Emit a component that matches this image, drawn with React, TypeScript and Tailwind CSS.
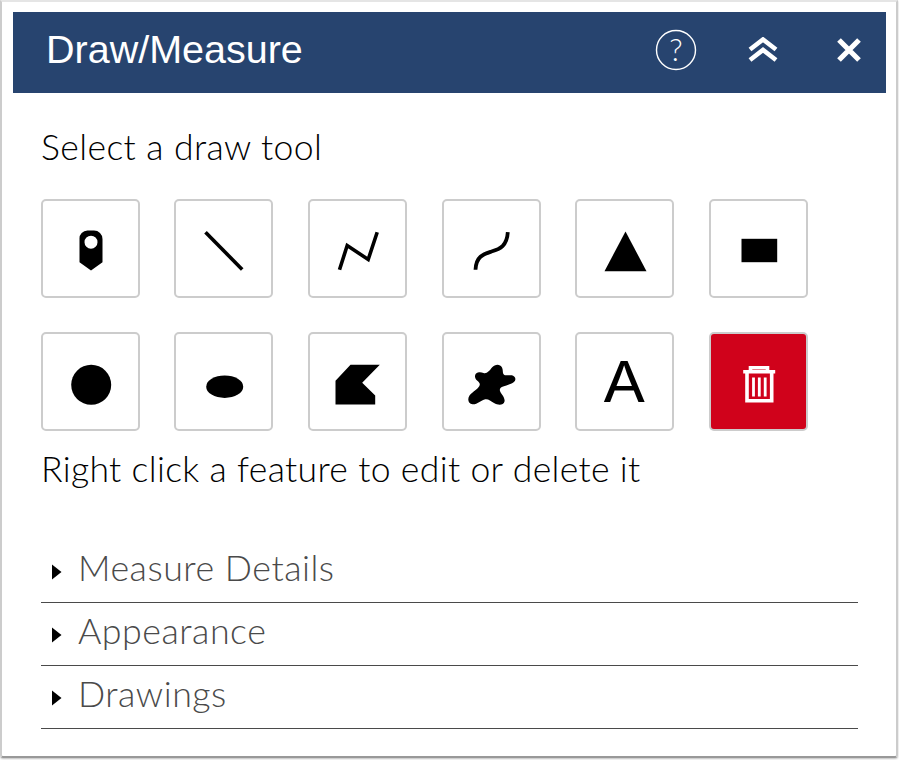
import React from 'react';

const iconProps = { width: 60, height: 60, viewBox: '0 0 60 60' };

const tools: React.ReactNode[] = [
  <svg {...iconProps}>
    <path
      fillRule="evenodd"
      d="M26.5 11.5h6.5a8.5 8.5 0 0 1 8.5 8.5v23.2L30 51.5l-11.5-8.3V20a8 8 0 0 1 8-8.5zM30 16.7a6.5 6.5 0 1 0 0 13 6.5 6.5 0 0 0 0-13z"
      fill="#000"
    />
  </svg>,
  <svg {...iconProps}>
    <path d="M11.5 13.2L48.2 50.5" stroke="#000" strokeWidth="3.6" fill="none" />
  </svg>,
  <svg {...iconProps}>
    <path d="M11.5 50.8L19.2 26.5L40.2 40.5L49.2 13.2" stroke="#000" strokeWidth="3.6" fill="none" />
  </svg>,
  <svg {...iconProps}>
    <path d="M13.5 50.8C14 37 22 35 29.5 32.5C38 30 45 27 45.8 13.2" stroke="#000" strokeWidth="3.8" fill="none" />
  </svg>,
  <svg {...iconProps}>
    <path d="M30.5 12.5L51.5 52.2H9.5z" fill="#000" />
  </svg>,
  <svg {...iconProps}>
    <rect x="12.5" y="19.8" width="35.7" height="23.4" fill="#000" />
  </svg>,
  <svg {...iconProps}>
    <circle cx="30.2" cy="32.8" r="20" fill="#000" />
  </svg>,
  <svg {...iconProps}>
    <ellipse cx="30.7" cy="34.7" rx="18.5" ry="11.2" fill="#000" />
  </svg>,
  <svg {...iconProps}>
    <path d="M22.5 12.8H51.8L34.2 30.8L47.2 43.5V52.5H7.5V28.8z" fill="#000" />
  </svg>,
  <svg {...iconProps}>
    <path
      d="M30.2 15.2C33 12 38 11.5 40 15.5C41.5 18.5 40 22.5 43 23.2C46 24 51 21.5 53 25.5C54.5 29 51.5 30.5 49 31.8C44 34 38 34 37.8 38C37.8 41 43.5 45 42.5 49.5C41.5 53.5 36 53.5 32 51C28.5 49 26 46.5 22.5 47.5C18.5 48.7 15 52.8 10.5 52.3C6.5 51.5 5 47.5 7.5 43.5C10.5 39.5 17.5 36.5 17.8 32.5C18 29.5 13 28.5 13 24.5C13 20 18 19.5 21.5 21C25 22 27.5 18.5 30.2 15.2z"
      fill="#000"
    />
  </svg>,
  <span className="font-['Inter',sans-serif] text-[56px] leading-none text-black font-normal scale-x-[1.14]">A</span>,
  <svg {...iconProps}>
    <path
      d="M14.2 19.8H46.2M21.5 18.5V15.7H38.5V18.5M18 21V48.7H42.7V21"
      stroke="#fff"
      strokeWidth="3.6"
      fill="none"
    />
    <path d="M24.5 25.5V44.5M30.3 25.5V44.5M36.2 25.5V44.5" stroke="#fff" strokeWidth="2.8" fill="none" />
  </svg>,
];

function ToolButton({ children, danger }: { children: React.ReactNode; danger?: boolean }) {
  return (
    <button
      className={
        danger
          ? 'w-[99px] h-[99px] flex items-center justify-center rounded-[5px] border-2 border-[#cccccc] bg-[#d0021b]'
          : 'w-[99px] h-[99px] flex items-center justify-center rounded-[5px] border-2 border-[#cccccc] bg-white'
      }
    >
      {children}
    </button>
  );
}

function Section({ title }: { title: string }) {
  return (
    <div className="h-[63px] flex items-center gap-[16px] pl-[10px] pb-[6px] border-b border-[#4a4a4a]">
      <svg width="11" height="16" viewBox="0 0 11 16" className="mt-[8px]">
        <path d="M1 0.5L10.5 8L1 15.5z" fill="#000" />
      </svg>
      <span className="text-[35.8px] leading-none font-light text-[#4a4a4a] tracking-[0.5px]">{title}</span>
    </div>
  );
}

export default function App() {
  return (
    <div className="w-[899px] h-[760px] bg-white font-['Lato',sans-serif]">
      <div className="w-[898px] h-[758px] border-t-2 border-t-[#e5e5e5] border-x-2 border-x-[#cccccc] border-b-2 border-b-[#999999] rounded-b-[3px] shadow-[0_1px_2px_rgba(0,0,0,0.25)] px-[11px] pt-[10px]">
        <header className="h-[81px] w-[873px] bg-[#27446f] flex items-center pl-[33px] pb-[6px] text-white">
          <h1 className="font-['Liberation_Sans',sans-serif] text-[39.5px] leading-none font-normal grow">Draw/Measure</h1>
          <svg width="42" height="42" viewBox="0 0 42 42" className="mr-[51px]">
            <circle cx="21" cy="21" r="19.5" stroke="#fff" strokeWidth="1.4" fill="none" />
            <text x="21" y="32" textAnchor="middle" fill="#fff" fontSize="31" fontFamily="Lato" fontWeight="300">?</text>
          </svg>
          <svg width="30" height="26" viewBox="0 0 30 26" className="mr-[58px] blur-[0.5px]">
            <path d="M2 12.5L15 2.5L28 12.5M2 23L15 13L28 23" stroke="#fff" strokeWidth="4.6" fill="none" />
          </svg>
          <svg width="26" height="26" viewBox="0 0 26 26" className="mr-[24px] blur-[0.5px]">
            <path d="M3 3L23 23M23 3L3 23" stroke="#fff" strokeWidth="5.2" fill="none" />
          </svg>
        </header>
        <div className="pl-[28px] pr-[27px]">
          <p className="mt-[35px] text-[35.6px] leading-[38px] font-light text-black tracking-[0.4px]">Select a draw tool</p>
          <div className="mt-[33px] grid grid-cols-[133px_134px_134px_133px_134px_99px] gap-y-[34px]">
            {tools.map((icon, i) => (
              <ToolButton key={i} danger={i === 11}>
                {icon}
              </ToolButton>
            ))}
          </div>
          <p className="mt-[19px] text-[35.6px] leading-[38px] font-light text-black tracking-[0.33px]">Right click a feature to edit or delete it</p>
          <div className="mt-[52px] w-[817px]">
            <Section title="Measure Details" />
            <Section title="Appearance" />
            <Section title="Drawings" />
          </div>
        </div>
      </div>
    </div>
  );
}
